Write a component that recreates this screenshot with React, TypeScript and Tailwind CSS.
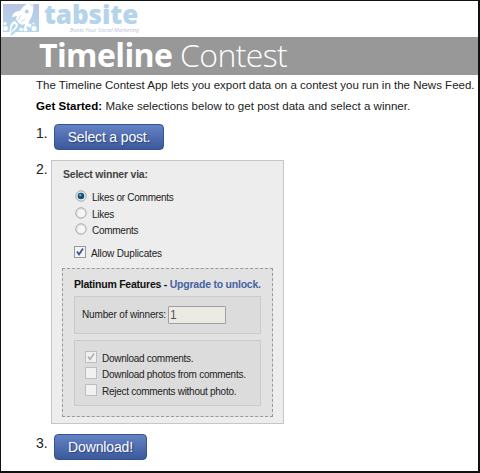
import {FC, memo, ReactNode} from 'react';

const Logo: FC = memo(() => (
  <div className="flex h-9 items-start pl-[1px]">
    <svg className="h-[36px] w-[37px] shrink-0" viewBox="0 0 37 36">
      <defs>
        <linearGradient id="tile" x1="0" x2="0" y1="0" y2="1">
          <stop offset="0" stopColor="#b8c5e2" />
          <stop offset="1" stopColor="#b4dbee" />
        </linearGradient>
      </defs>
      <path d="M1 3h36v28H14l-5 4-1-4H1z" fill="url(#tile)" />
      {/* rocket body, fins and nose */}
      <path d="M31 0c-6 2-10 5-13 10-4 0-7 2-8 6l5-1c-1 2-1 4 0 5l3 3c2 1 3 1 5 0l-1 5c4-2 5-5 5-8 4-5 5-12 4-20z" fill="#fff" />
      <path d="M27.500 2.500c1 1.500 2 2 3.800 2.200" fill="none" stroke="#b5c8e4" strokeWidth=".8" />
      <circle cx="24.800" cy="10.500" fill="#b5cfe7" r="2" />
      <path d="m19 14-3 5M23 18l-4 3" stroke="#b5cfe7" strokeWidth=".7" />
      {/* exhaust flame */}
      <path d="M13 20c-4 1-6 5-5 14 2-5 7-4 8-11z" fill="#fff" />
      <path d="M12.500 22.500c-3 2-3.500 5-3.500 9 2-4 4-4 5-7z" fill="#b4daee" />
      <g fill="#fff">
        <circle cx="3" cy="22.500" r="1.600" />
        <circle cx="3.500" cy="27.500" r="2.400" />
        <circle cx="19" cy="28.500" r="1.800" />
        <circle cx="23.500" cy="28.500" r="2.100" />
        <circle cx="27.500" cy="24.500" r="2" />
        <circle cx="32" cy="27.500" r="2.500" />
        <circle cx="31.500" cy="22.500" r="1" />
      </g>
    </svg>
    <div className="flex w-[100px] flex-col pl-[5px]">
      <span className="-mt-[6px] h-[31px] font-['Open_Sans',sans-serif] text-[26px] leading-[38px] font-extrabold tracking-[-0.1px] text-[#b5d4ea]">
        tabsite
      </span>
      <span className="self-end font-['Open_Sans',sans-serif] text-[5.6px] leading-[8px] whitespace-nowrap text-[#b9c2dc] italic">
        Boost Your Social Marketing
      </span>
    </div>
  </div>
));

const Step: FC<{number: number; nudge: string; children: ReactNode}> = memo(({number, nudge, children}) => (
  <li className="flex items-start">
    <span className="w-[15px] shrink-0 pt-px text-[14px] leading-[16px]">{number}.</span>
    <div className={nudge}>{children}</div>
  </li>
));

const BlueButton: FC<{className: string; children: ReactNode}> = memo(({className, children}) => (
  <button
    className={`flex h-[26px] items-center justify-center rounded-[4px] border border-[#35538f] bg-linear-to-b from-[#6582c4] to-[#3c5a9b] text-[14px] tracking-[-0.15px] whitespace-nowrap text-white [text-shadow:1px_1px_1px_#29447e] ${className}`}>
    {children}
  </button>
));

const Radio: FC<{checked?: boolean; label: string}> = memo(({checked, label}) => (
  <label className="flex h-[16.5px] items-start">
    <svg className="mr-[5px] h-3 w-3" viewBox="0 0 12 12">
      <circle cx="6" cy="6" fill="#dedede" r="5.3" stroke="#a2a2a2" strokeWidth=".8" />
      <circle cx="6.3" cy="6.3" fill="#f5f5f5" r="3.8" />
      {checked && <circle cx="6" cy="6" fill="#164f78" r="3.3" />}
      {checked && <circle cx="5.3" cy="5.1" fill="#62b6df" r="1.2" />}
    </svg>
    <span className="mt-[1px] leading-[14px]">{label}</span>
  </label>
));

const Check: FC<{checked?: boolean; disabled?: boolean; label: string}> = memo(({checked, disabled, label}) => (
  <label className="flex h-[16.7px] items-start">
    <svg className="mr-[5px] h-3 w-3" viewBox="0 0 12 12">
      <rect
        fill={disabled ? '#f1f1f1' : '#f4f4f4'}
        height="11"
        stroke={disabled ? '#bebebe' : '#9a9a9a'}
        width="11"
        x=".5"
        y=".5"
      />
      {checked && (
        <path d="m3 5.5 2 3 4-6" fill="none" stroke={disabled ? '#aaa' : '#3e5593'} strokeWidth={disabled ? 1.4 : 1.8} />
      )}
    </svg>
    <span className="mt-[1px] leading-[14px]">{label}</span>
  </label>
));

const WinnerPanel: FC = memo(() => (
  <div className="h-[264px] w-[233px] border border-[#c6c6c6] bg-[#ededed] px-[10px] pt-[6px] text-[10px] tracking-[-0.27px] whitespace-nowrap text-[#222]">
    <h2 className="pl-px text-[10.5px] leading-[14px] font-bold tracking-[-0.22px] text-[#444]">Select winner via:</h2>
    <div className="mt-[9px] pl-[13px]">
      <Radio checked label="Likes or Comments" />
      <Radio label="Likes" />
      <Radio label="Comments" />
    </div>
    <div className="mt-[6px] h-[22px] pl-[12px] tracking-[-0.15px]">
      <Check checked label="Allow Duplicates" />
    </div>
    <div className="h-[149px] border border-dashed border-[#999] bg-[#e2e2e2] px-[11px] pt-[8px]">
      <h3 className="text-[10.5px] leading-[14px] font-bold tracking-[-0.23px] text-[#111]">
        Platinum Features - <a className="text-[#4562a0]">Upgrade to unlock.</a>
      </h3>
      <div className="mt-[5px] flex h-[38px] items-center border border-[#cbcbcb] bg-[#dcdcdc] pl-[7px]">
        <span className="w-[86px] tracking-[-0.15px]">Number of winners:</span>
        <span className="h-[18px] w-[58px] rounded-[1px] border border-[#a0a0a0] bg-[#ebebe4] pl-[1px] text-[12px] leading-[16px] text-[#555]">
          1
        </span>
      </div>
      <div className="mt-[6px] h-[66px] border border-[#cbcbcb] bg-[#dcdcdc] pt-[10px] pl-[10px]">
        <Check checked disabled label="Download comments." />
        <Check disabled label="Download photos from comments." />
        <Check disabled label="Reject comments without photo." />
      </div>
    </div>
  </div>
));

export default function App() {
  return (
    <main className="flex h-[473px] w-[480px] flex-col border-t border-r-2 border-b-2 border-l border-[#111] bg-white font-['Liberation_Sans',Arial,sans-serif] text-[#222]">
      <Logo />
      <h1 className="flex h-[38px] shrink-0 items-center bg-[#989898] pb-[2px] pl-[38px] font-['Open_Sans',sans-serif] text-[32px] leading-[36px] tracking-[-0.6px] whitespace-pre text-white">
        <span className="font-bold">Timeline</span>
        <span className="font-light"> Contest</span>
      </h1>
      <div className="pt-[3px] pl-[35px] text-[11.5px] leading-[15px] whitespace-nowrap">
        <p>The Timeline Contest App lets you export data on a contest you run in the News Feed.</p>
        <p className="mt-[6px] tracking-[0.03px]">
          <b className="text-black">Get Started:</b> Make selections below to get post data and select a winner.
        </p>
      </div>
      <ol className="flex flex-col gap-[10px] pt-[10px] pl-[35px]">
        <Step nudge="pl-[3px]" number={1}>
          <BlueButton className="w-[110px]">Select a post.</BlueButton>
        </Step>
        <Step nudge="pl-0" number={2}>
          <WinnerPanel />
        </Step>
        <Step nudge="pl-[3px]" number={3}>
          <BlueButton className="w-[93px]">Download!</BlueButton>
        </Step>
      </ol>
    </main>
  );
}
